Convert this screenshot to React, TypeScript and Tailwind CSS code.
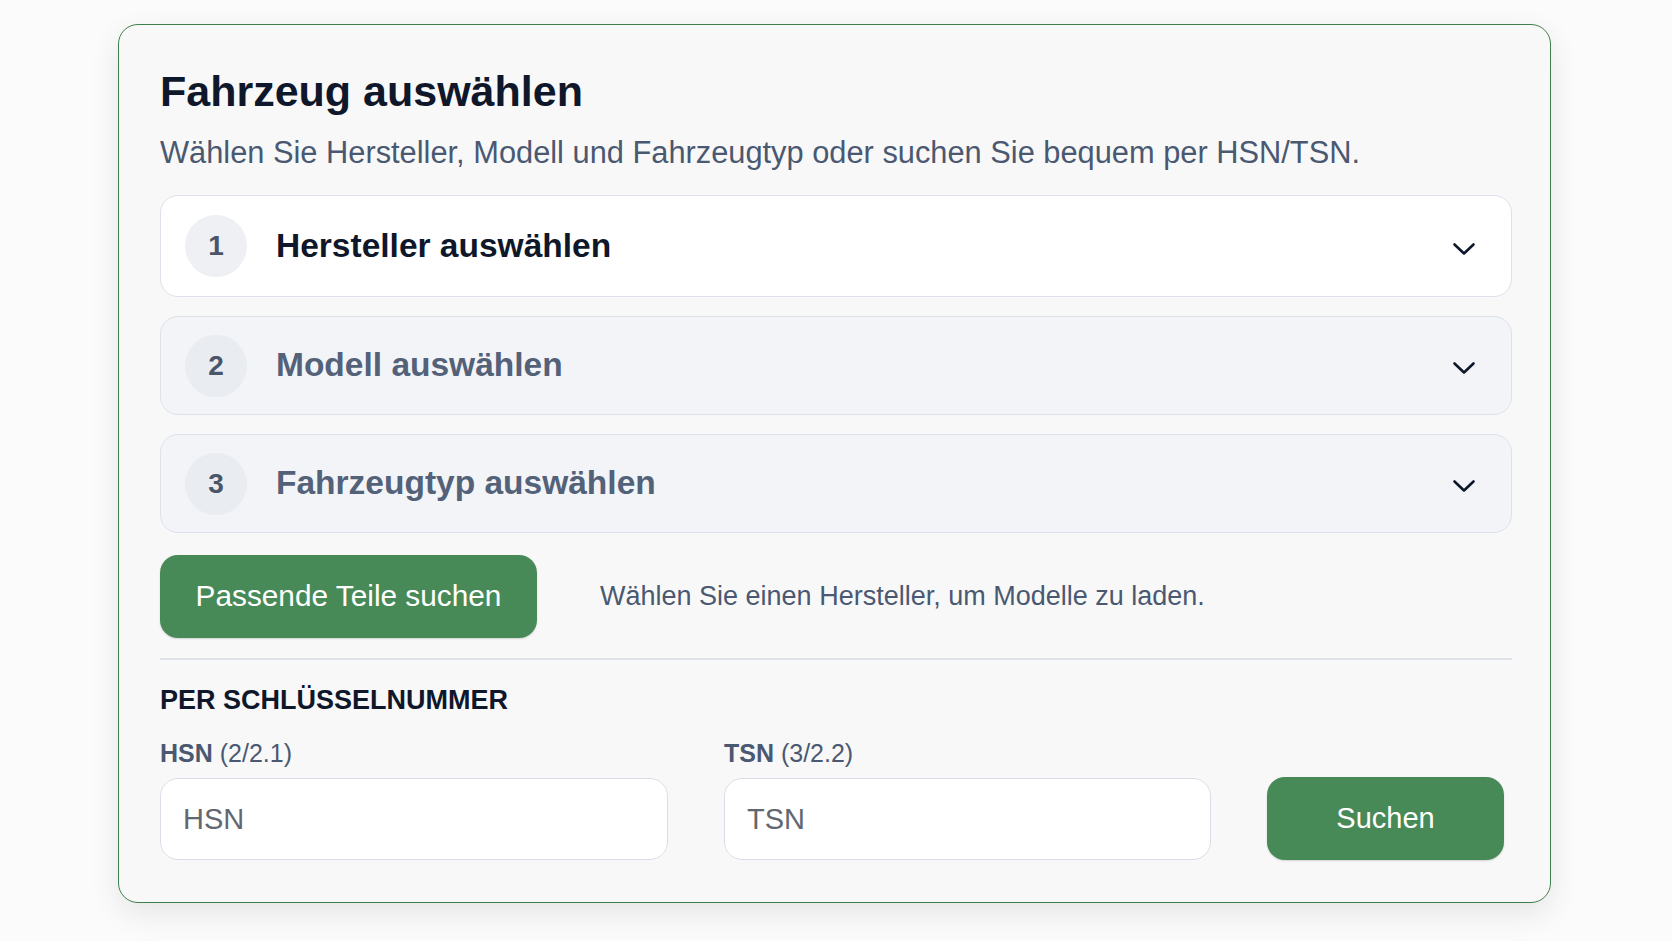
import { useState } from "react";

type Step = {
  n: number;
  label: string;
  active: boolean;
};

const steps: Step[] = [
  { n: 1, label: "Hersteller auswählen", active: true },
  { n: 2, label: "Modell auswählen", active: false },
  { n: 3, label: "Fahrzeugtyp auswählen", active: false },
];

function Chevron() {
  return (
    <svg
      width="24"
      height="24"
      viewBox="0 0 24 24"
      fill="none"
      stroke="#0f172a"
      strokeWidth="2.6"
      strokeLinecap="round"
      strokeLinejoin="round"
    >
      <path d="M2.5 7.5 12 16.5 21.5 7.5" />
    </svg>
  );
}

function StepRow({ step }: { step: Step }) {
  return (
    <button
      className={`flex items-center w-full rounded-[18px] border px-6 text-left ${
        step.active
          ? "h-[102px] bg-white border-[#dce1ea]"
          : "h-[99px] bg-[#f2f4f7] border-[#dde2ea]"
      }`}
    >
      <span
        className={`flex items-center justify-center w-[62px] h-[62px] rounded-full text-[28px] font-bold text-[#4a5568] ${
          step.active ? "bg-[#eef0f3]" : "bg-[#e9ecf0]"
        }`}
      >
        {step.n}
      </span>
      <span
        className={`ml-[29px] text-[33.5px] font-bold ${
          step.active ? "text-[#0f172a]" : "text-[#536179]"
        }`}
      >
        {step.label}
      </span>
      <span className="ml-auto mr-[11px] mt-[5px]">
        <Chevron />
      </span>
    </button>
  );
}

export default function App() {
  const [hsn, setHsn] = useState("");
  const [tsn, setTsn] = useState("");

  return (
    <div
      className="min-h-[941px] w-full bg-[#fbfbfb] pt-[24px] pl-[118px]"
      style={{ fontFamily: '"Liberation Sans", Arial, sans-serif' }}
    >
      <div className="w-[1433px] rounded-[20px] border-[1.5px] border-[#3f7f4d] bg-[#f8f8f8] pl-[41px] pr-[38px] pt-[40px] pb-[42px] shadow-[0_10px_30px_rgba(0,0,0,0.09)]">
        <h1 className="text-[43px] leading-[52px] font-bold text-[#0f172a]">
          Fahrzeug auswählen
        </h1>
        <p className="mt-[17px] text-[30.8px] leading-[38px] text-[#4a5872]">
          Wählen Sie Hersteller, Modell und Fahrzeugtyp oder suchen Sie bequem per HSN/TSN.
        </p>

        <div className="mt-[23px] flex flex-col gap-[19px]">
          {steps.map((s) => (
            <StepRow key={s.n} step={s} />
          ))}
        </div>

        <div className="mt-[22px] flex items-center">
          <button className="h-[83px] w-[377px] rounded-[18px] bg-[#478a57] text-[29.8px] text-white shadow-[0_1px_2px_rgba(0,0,0,0.15)]">
            Passende Teile suchen
          </button>
          <span className="ml-[63px] text-[27px] text-[#4a5872]">
            Wählen Sie einen Hersteller, um Modelle zu laden.
          </span>
        </div>

        <div className="mt-[20px] h-[2px] bg-[#e0e3ea]" />

        <h2 className="mt-[24px] text-[27px] leading-[32px] font-bold text-[#0f172a]">
          PER SCHLÜSSELNUMMER
        </h2>

        <div className="mt-[22px] grid grid-cols-[508px_487px_237px] gap-x-[56px] items-end">
          <label className="flex flex-col">
            <span className="text-[25px] leading-[30px] text-[#4a5872]">
              <b>HSN</b> (2/2.1)
            </span>
            <input
              value={hsn}
              onChange={(e) => setHsn(e.target.value)}
              placeholder="HSN"
              className="mt-[10px] h-[82px] rounded-[18px] border-[1.5px] border-[#d9dee8] bg-white px-[22px] text-[29px] text-[#1f2937] placeholder:text-[#62676f] outline-none"
            />
          </label>
          <label className="flex flex-col">
            <span className="text-[25px] leading-[30px] text-[#4a5872]">
              <b>TSN</b> (3/2.2)
            </span>
            <input
              value={tsn}
              onChange={(e) => setTsn(e.target.value)}
              placeholder="TSN"
              className="mt-[10px] h-[82px] rounded-[18px] border-[1.5px] border-[#d9dee8] bg-white px-[22px] text-[29px] text-[#1f2937] placeholder:text-[#62676f] outline-none"
            />
          </label>
          <button className="h-[83px] rounded-[18px] bg-[#478a57] text-[29px] text-white shadow-[0_1px_2px_rgba(0,0,0,0.15)]">
            Suchen
          </button>
        </div>
      </div>
    </div>
  );
}
